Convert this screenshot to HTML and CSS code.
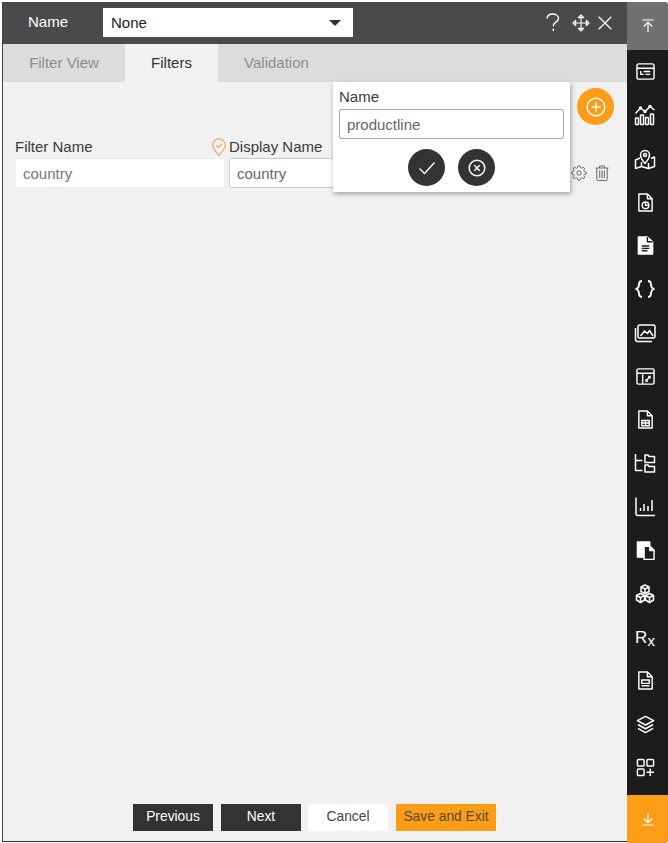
FILE: index.html
```html
<!DOCTYPE html>
<html lang="en">
<head>
<meta charset="utf-8">
<title>Filters</title>
<link rel="stylesheet" href="styles.css">
</head>
<body>
<div class="app">
  <main class="main">
    <header class="header">
      <span class="header-label">Name</span>
      <div class="select"><span>None</span><i class="caret"></i></div>
      <div class="header-tools">
        <svg class="tool-help" width="14" height="19" viewBox="0 0 14 19" fill="none" stroke="#fff" stroke-width="1.400"><path d="M1 5.500C1.200 2.800 3.500 1 6.700 1c3.200 0 5.800 1.800 5.800 4.300 0 2-1.300 3-2.900 4.100-1.500 1-2.300 2-2.300 3.900"/><path d="M7.300 15.800V18"/></svg>
        <svg class="tool-move" width="18" height="18" viewBox="0 0 18 18" fill="none" stroke="#fff" stroke-width="1.100" stroke-linejoin="round"><path d="M9 1v16M1 9h16"/><path d="M6.300 3.700 9 1l2.700 2.700zM6.300 14.300 9 17l2.700-2.700zM3.700 6.300 1 9l2.700 2.700zM14.300 6.300 17 9l-2.700 2.700z"/></svg>
        <svg class="tool-close" width="14" height="14" viewBox="0 0 14 14" fill="none" stroke="#fff" stroke-width="1.300"><path d="M.7.700l12.600 12.600M13.300.700.700 13.300"/></svg>
      </div>
    </header>
    <nav class="tabs">
      <span class="tab tab-first">Filter View</span>
      <span class="tab tab-active">Filters</span>
      <span class="tab tab-last">Validation</span>
    </nav>
    <section class="content">
      <div class="add-row">
        <button class="circle circle-orange" type="button" aria-label="Add">
          <svg width="20" height="20" viewBox="0 0 20 20" fill="none" stroke="#fff" stroke-width="1.500"><circle cx="10" cy="10" r="8.800"/><path d="M10 5.500v9M5.500 10h9"/></svg>
        </button>
      </div>
      <div class="filter-row">
        <div class="field field-name">
          <div class="label-row">
            <label>Filter Name</label>
            <svg class="pin" width="14" height="18" viewBox="0 0 14 18" fill="none" stroke="#f0a055" stroke-width="1.100"><path d="M7 17.300C3.500 13.500.7 10.800.7 7a6.300 6.300 0 0 1 12.600 0c0 3.800-2.800 6.500-6.300 10.300z"/><path d="M4.300 7.200l2.100 2.100 3.500-3.500"/></svg>
          </div>
          <div class="input input-ghost">country</div>
        </div>
        <div class="field field-display">
          <div class="label-row"><label>Display Name</label></div>
          <div class="input">country</div>
        </div>
        <div class="row-icons">
          <svg width="16" height="16" viewBox="0 0 24 24" fill="none" stroke="#666" stroke-width="1.500"><circle cx="12" cy="12" r="3.300"/><path d="M19.400 15a1.650 1.650 0 0 0 .33 1.820l.06.06a2 2 0 0 1 0 2.830 2 2 0 0 1-2.830 0l-.06-.06a1.650 1.650 0 0 0-1.820-.33 1.650 1.650 0 0 0-1 1.510V21a2 2 0 0 1-2 2 2 2 0 0 1-2-2v-.09A1.650 1.650 0 0 0 9 19.400a1.650 1.650 0 0 0-1.820.33l-.06.06a2 2 0 0 1-2.830 0 2 2 0 0 1 0-2.830l.06-.06a1.650 1.650 0 0 0 .33-1.820 1.650 1.650 0 0 0-1.510-1H3a2 2 0 0 1-2-2 2 2 0 0 1 2-2h.09A1.650 1.650 0 0 0 4.600 9a1.650 1.650 0 0 0-.33-1.820l-.06-.06a2 2 0 0 1 0-2.830 2 2 0 0 1 2.830 0l.06.06a1.650 1.650 0 0 0 1.820.33H9a1.650 1.650 0 0 0 1-1.510V3a2 2 0 0 1 2-2 2 2 0 0 1 2 2v.09a1.650 1.650 0 0 0 1 1.510 1.650 1.650 0 0 0 1.820-.33l.06-.06a2 2 0 0 1 2.830 0 2 2 0 0 1 0 2.830l-.06.06a1.650 1.650 0 0 0-.33 1.820V9a1.650 1.650 0 0 0 1.510 1H21a2 2 0 0 1 2 2 2 2 0 0 1-2 2h-.09a1.650 1.650 0 0 0-1.510 1z"/></svg>
          <svg width="14" height="16" viewBox="0 0 14 16" fill="none" stroke="#666" stroke-width="1"><path d="M.5 3h13M4.500 3V1h5v2M1.800 3v11c0 .8.500 1.500 1.300 1.500h7.800c.8 0 1.300-.7 1.300-1.500V3M4.700 5.500v7.500M7 5.500v7.500M9.300 5.500v7.500"/></svg>
        </div>
      </div>
      <div class="popup">
        <label>Name</label>
        <div class="input popup-input">productline</div>
        <div class="popup-actions">
          <button class="circle circle-dark" type="button" aria-label="Confirm">
            <svg width="18" height="14" viewBox="0 0 18 14" fill="none" stroke="#fff" stroke-width="1.400"><path d="M1.500 7.500 6.500 12.500 16.500 1.500"/></svg>
          </button>
          <button class="circle circle-dark" type="button" aria-label="Cancel">
            <svg width="18" height="18" viewBox="0 0 18 18" fill="none" stroke="#fff" stroke-width="1.500"><circle cx="9" cy="9" r="7.800"/><path d="M6.300 6.300l5.400 5.400M11.700 6.300l-5.400 5.400"/></svg>
          </button>
        </div>
      </div>
    </section>
    <footer class="footer">
      <button class="btn btn-dark" type="button">Previous</button>
      <button class="btn btn-dark" type="button">Next</button>
      <button class="btn btn-white" type="button">Cancel</button>
      <button class="btn btn-orange" type="button">Save and Exit</button>
    </footer>
  </main>
  <aside class="sidebar">
    <div class="side-end side-top">
      <svg width="14" height="14" viewBox="0 0 14 14" fill="none" stroke="#fff" stroke-width="1.200"><path d="M1.500 1h11M7 13V3.500M2.800 7.500 7 3.200l4.200 4.300"/></svg>
    </div>
    <div class="side-list">
      <div class="slot"><svg class="si" viewBox="0 0 20 20"><rect x="1" y="2" width="18" height="16" rx="2"/><path d="M1 6.500h18M5 9.500v3.500h3M8 10h7M10 13h5"/></svg></div>
      <div class="slot"><svg class="si si-wide" viewBox="0 0 22 22"><path d="M1.500 9.500 6.500 4l4.500 3.500 5-5 4.500 3.500"/><circle class="fill" cx="6.500" cy="4" r="1"/><circle class="fill" cx="11" cy="7.500" r="1"/><circle class="fill" cx="16" cy="2.500" r="1"/><rect x="1.500" y="14" width="3" height="6.500" rx=".6"/><rect x="6.500" y="11" width="3" height="9.500" rx=".6"/><rect x="11.500" y="13.500" width="3" height="7" rx=".6"/><rect x="16.500" y="10" width="3" height="10.500" rx=".6"/></svg></div>
      <div class="slot"><svg class="si si-wide" viewBox="0 0 22 22"><path d="M6 10 1.500 12v8.500l6-2 7 2 6-2V9L17 10.500M7.500 14v4.500M14.500 15v5.500"/><path d="M11 15.500C8.500 12.500 6.500 10 6.500 7a4.500 4.500 0 0 1 9 0c0 3-2 5.500-4.500 8.500z"/><circle cx="11" cy="7" r="1.500"/></svg></div>
      <div class="slot"><svg class="si" viewBox="0 0 20 20"><path d="M3 1h9l5 5v13H3z"/><path d="M12 1v5h5"/><circle cx="10" cy="13" r="3.500"/><path d="M10 9.500V13h3.500"/></svg></div>
      <div class="slot"><svg class="si" viewBox="0 0 20 20"><path class="fill" d="M2.500 1h9.500l5.500 5v13h-15z"/><path class="cut" d="M12 1v5h5.500M6 10.500h8M6 13h8M6 15.500h6"/></svg></div>
      <div class="slot"><svg class="si si-wide" viewBox="0 0 22 22"><path d="M8 3C5.500 3 5 4 5 6.500c0 2.500-.5 3.700-3 4.500 2.500.8 3 2 3 4.500 0 2.500.5 3.500 3 3.500M14 3c2.500 0 3 1 3 3.500 0 2.500.5 3.700 3 4.500-2.500.8-3 2-3 4.500 0 2.500-.5 3.500-3 3.500" stroke-width="1.800"/></svg></div>
      <div class="slot"><svg class="si si-wide" viewBox="0 0 22 22"><rect x="4" y="3" width="17" height="13" rx="1.500"/><path d="M1.500 6v11.500a2 2 0 0 0 2 2H18M6.500 14l4-5 3 2.500 2-3 3.500 5.500M8 6.500h.1"/></svg></div>
      <div class="slot"><svg class="si" viewBox="0 0 20 20"><rect x="1" y="2" width="18" height="16" rx="1.500"/><path d="M1 6.500h18M7 6.500V18M10.500 14.500l4-4M12.800 10h2v2M10.500 13v2h2"/></svg></div>
      <div class="slot"><svg class="si" viewBox="0 0 20 20"><path d="M3 1h9l5 5v13H3z"/><path d="M12 1v5h5M6 11h8v5.500H6zM6 13.700h8M10 11v5.500"/></svg></div>
      <div class="slot"><svg class="si si-wide" viewBox="0 0 22 22"><path d="M1.500 2v16.500h7M1.500 8.500h7"/><path d="M11 5.500V3h3l1 1.500h5.500v6H11zM11 13h3l1 1.500h5.500V20H11z"/></svg></div>
      <div class="slot"><svg class="si si-wide" viewBox="0 0 22 22"><path d="M2 1.500V17.500a2 2 0 0 0 2 2h17M6.500 12v3M10 8v7M14 10v5M18 4v11"/></svg></div>
      <div class="slot"><svg class="si" viewBox="0 0 20 20"><path class="fill" d="M1.500 1h13v4H8v12H1.500z"/><path class="front" d="M8.500 5.500h6l4.500 4.500v9.500H8.500z"/><path class="fill" d="M14.500 5.500v4.500H19z"/></svg></div>
      <div class="slot"><svg class="si si-wide" viewBox="0 0 22 22"><path d="M11 2l4 2v4.500l-4 2-4-2V4zM7 4l4 2 4-2M11 6v4.500M6.500 10.500l4 2V17l-4 2.500-4-2.500v-4.500zM2.500 12.500l4 2 4-2M6.500 14.500v5M15.500 10.500l4 2V17l-4 2.500-4-2.500v-4.500zM11.500 12.500l4 2 4-2M15.500 14.500v5"/></svg></div>
      <div class="slot"><span class="rx">R<span class="rx-x">x</span></span></div>
      <div class="slot"><svg class="si" viewBox="0 0 20 20"><path d="M3 1h9l5 5v13H3z"/><path d="M12 1v5h5M6 9.500h8v3.500H6zM6 15.500h8"/></svg></div>
      <div class="slot"><svg class="si" viewBox="0 0 20 20"><path d="M10 1.500 18.500 6 10 10.500 1.500 6zM2 10l8 4.500 8-4.500M2 14l8 4.500 8-4.500" stroke-width="1.600"/></svg></div>
      <div class="slot"><svg class="si" viewBox="0 0 20 20"><rect x="1.500" y="1.500" width="7" height="7" rx="1"/><rect x="11.500" y="1.500" width="7" height="7" rx="1"/><rect x="1.500" y="11.500" width="7" height="7" rx="1"/><path d="M15 11v8M11 15h8"/></svg></div>
    </div>
    <div class="side-end side-bottom">
      <svg width="14" height="14" viewBox="0 0 14 14" fill="none" stroke="#fff" stroke-width="1.200"><path d="M1.500 13h11M7 1v9.500M2.800 6.500 7 10.800l4.200-4.300"/></svg>
    </div>
  </aside>
</div>
</body>
</html>
```

FILE: styles.css
```css
* { box-sizing: border-box; }
html, body { margin: 0; height: 100%; }
body {
  background: #fff;
  font-family: "Liberation Sans", Arial, sans-serif;
  color: #333;
  overflow: hidden;
}
.app {
  display: flex;
  width: 668px;
  height: 843px;
  padding-top: 2px;
}
.main {
  width: 625px;
  margin-left: 2px;
  display: flex;
  flex-direction: column;
  background: #f1f1f1;
  border-left: 1px solid #444;
  border-bottom: 1px solid #333;
  height: 840px;
}
.header {
  height: 42px;
  flex: none;
  background: #4a4a4a;
  display: flex;
  align-items: center;
}
.header-label {
  width: 100px;
  padding-left: 25px;
  color: #fff;
  font-size: 15px;
  margin-top: -4px;
}
.select {
  width: 250px;
  height: 29px;
  margin-top: -1px;
  background: #fff;
  color: #222;
  font-size: 15px;
  padding: 0 8px;
  display: flex;
  align-items: center;
  justify-content: space-between;
}
.caret {
  width: 0;
  height: 0;
  margin-right: 4px;
  border-left: 6px solid transparent;
  border-right: 6px solid transparent;
  border-top: 6px solid #333;
}
.header-tools {
  margin-left: auto;
  margin-right: 15px;
  display: flex;
  align-items: center;
}
.tool-help { margin-top: -1px; }
.tool-move { margin-left: 12px; }
.tool-close { margin-left: 8px; }
.tabs {
  height: 38px;
  flex: none;
  background: #dcdcdc;
  display: flex;
  font-size: 15px;
  color: #8c8c8c;
}
.tab { display: flex; align-items: center; justify-content: center; padding-bottom: 1px; }
.tab-first { width: 122px; }
.tab-active { width: 93px; background: #f1f1f1; color: #333; }
.tab-last { width: 117px; }
.content {
  flex: 1;
  position: relative;
  padding: 0 12px;
}
.add-row {
  display: flex;
  justify-content: flex-end;
  padding-top: 6px;
  padding-right: 1px;
}
.circle {
  width: 37px;
  height: 37px;
  border: 0;
  padding: 0;
  border-radius: 50%;
  display: flex;
  align-items: center;
  justify-content: center;
}
.circle-orange { background: #fb9d16; }
.circle-dark { background: #333; }
.filter-row {
  display: flex;
  align-items: flex-end;
  margin-top: 11px;
}
.field { flex: none; }
.field-name { width: 210px; }
.field-display { width: 210px; margin-left: 4px; }
.label-row {
  display: flex;
  align-items: flex-end;
  justify-content: space-between;
  height: 22px;
}
.field label {
  display: block;
  font-size: 15px;
  line-height: 17px;
  margin-bottom: 3px;
  color: #3a3a3a;
}
.pin { display: block; margin-bottom: 2px; margin-right: -1px; }
.input {
  height: 30px;
  background: #fff;
  border: 1px solid #ccc;
  border-radius: 2px;
  font-size: 15px;
  color: #666;
  padding: 0 7px;
  display: flex;
  align-items: center;
}
.input-ghost { border: 1px dotted #ddd; color: #777; }
.row-icons {
  margin-left: auto;
  display: flex;
  align-items: center;
  gap: 8px;
  height: 30px;
  margin-right: 6px;
}
.popup {
  position: absolute;
  left: 330px;
  top: 0;
  width: 237px;
  height: 110px;
  background: #fff;
  box-shadow: 1px 2px 5px rgba(0, 0, 0, .35);
  padding: 6px 6px 0;
}
.popup label { display: block; font-size: 15px; line-height: 17px; margin-bottom: 4px; color: #3a3a3a; }
.popup-input { height: 30px; border-color: #a6a6ae; color: #666; }
.popup-actions { display: flex; justify-content: center; gap: 13px; margin-top: 10px; }
.footer {
  flex: none;
  height: 37px;
  display: flex;
  align-items: flex-start;
  padding-left: 130px;
}
.btn {
  height: 27px;
  border: 0;
  font-family: inherit;
  font-size: 13.800px;
  padding: 0 0 2px;
  flex: none;
}
.btn-dark { width: 80px; background: #333; color: #fff; margin-right: 8px; }
.btn-white { width: 80px; background: #fff; color: #444; margin-left: -1px; margin-right: 8px; }
.btn-orange { width: 100px; background: #fb9d16; color: #5a4a2a; }
.sidebar {
  width: 41px;
  flex: none;
  display: flex;
  flex-direction: column;
  background: #1c1c1c;
  height: 841px;
  border-radius: 0 4px 4px 0;
  overflow: hidden;
}
.side-end {
  height: 48px;
  flex: none;
  display: flex;
  align-items: center;
  justify-content: center;
}
.side-top { background: #707070; }
.side-bottom { background: #fb9d16; }
.side-list {
  flex: 1;
  display: grid;
  grid-auto-rows: 43.500px;
  align-content: start;
  padding-right: 5px;
}
.slot { display: flex; align-items: center; justify-content: center; }
.si {
  width: 19px;
  height: 19px;
  fill: none;
  stroke: #fff;
  stroke-width: 1.500;
  stroke-linejoin: round;
  display: block;
}
.si-wide { width: 22px; height: 22px; }
.si .fill { fill: #fff; stroke: #fff; }
.si .front { fill: #1c1c1c; stroke: #fff; }
.si .cut { stroke: #1c1c1c; }
.rx { color: #fff; font-size: 17px; line-height: 19px; }
.rx-x { font-size: 15px; position: relative; top: 3px; }
```
